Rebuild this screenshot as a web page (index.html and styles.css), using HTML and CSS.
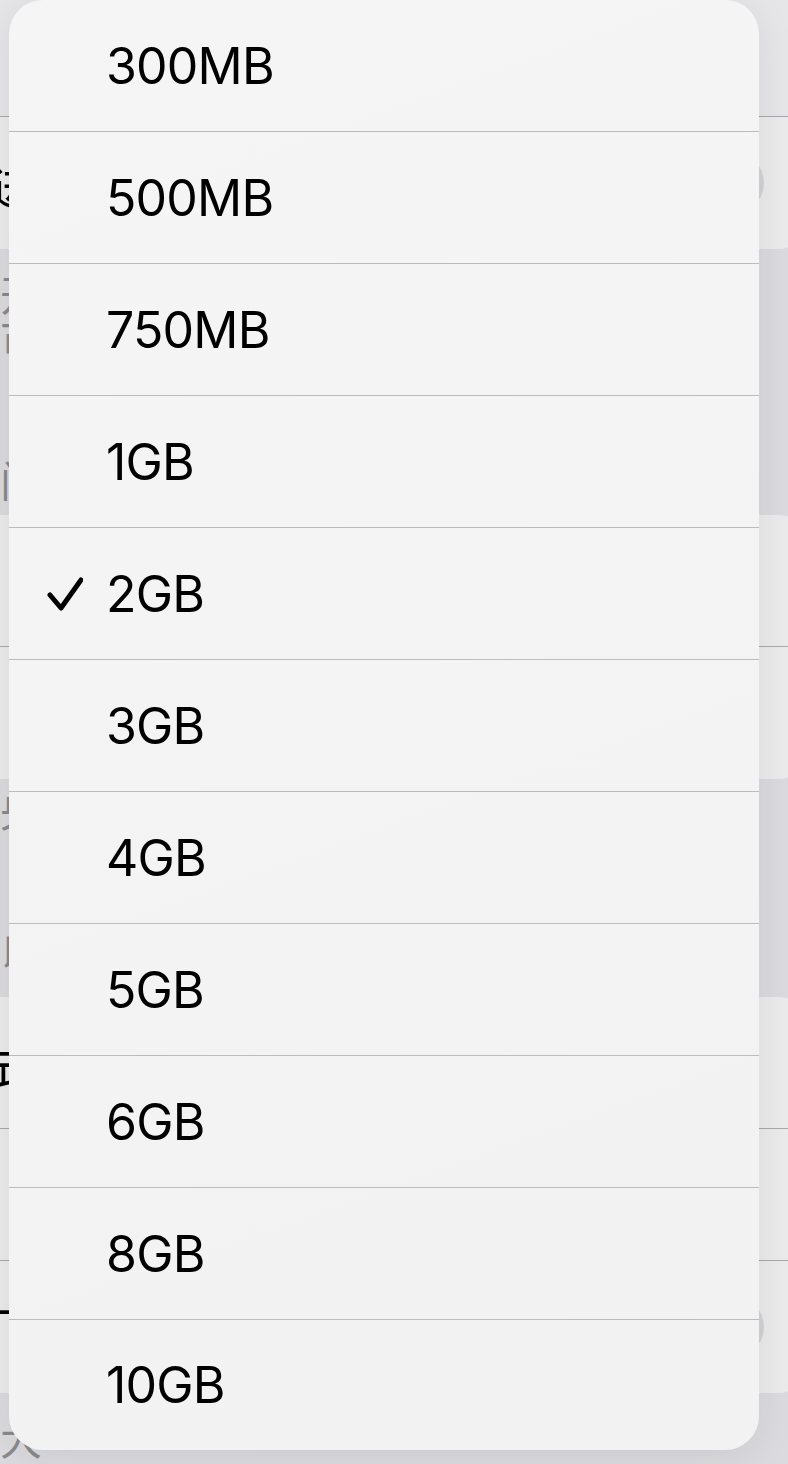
FILE: index.html
```html
<!DOCTYPE html>
<html lang="zh-CN">
<head>
  <meta charset="UTF-8">
  <title>缓存大小</title>
  <link rel="stylesheet" href="styles.css">
</head>
<body>
  <div class="page">
    <div class="navbar"></div>

    <div class="group group-first">
      <div class="row">
        <span class="row-label">进</span>
        <span class="toggle"></span>
      </div>
    </div>

    <div class="gap gap-a">
      <p class="note">开</p>
      <p class="note">可</p>
      <p class="header">门</p>
    </div>

    <div class="group">
      <div class="row"><span class="row-label"></span></div>
      <div class="row"><span class="row-label"></span></div>
    </div>

    <div class="gap gap-b">
      <p class="note">央</p>
      <p class="header">以</p>
    </div>

    <div class="group">
      <div class="row"><span class="row-label">式</span></div>
      <div class="row"><span class="row-label"></span></div>
      <div class="row">
        <span class="row-label">下</span>
        <span class="toggle"></span>
      </div>
    </div>

    <div class="gap gap-c">
      <p class="note">大</p>
    </div>
  </div>

  <div class="menu">
    <div class="menu-item"><span class="check"></span><span class="menu-text">300MB</span></div>
    <div class="menu-item"><span class="check"></span><span class="menu-text">500MB</span></div>
    <div class="menu-item"><span class="check"></span><span class="menu-text">750MB</span></div>
    <div class="menu-item"><span class="check"></span><span class="menu-text">1GB</span></div>
    <div class="menu-item selected">
      <span class="check">
        <svg width="36" height="36" viewBox="0 0 36 36">
          <path d="M3 19 L14 32 L34 4" fill="none" stroke="#000" stroke-width="5" stroke-linecap="round" stroke-linejoin="round"/>
        </svg>
      </span>
      <span class="menu-text">2GB</span>
    </div>
    <div class="menu-item"><span class="check"></span><span class="menu-text">3GB</span></div>
    <div class="menu-item"><span class="check"></span><span class="menu-text">4GB</span></div>
    <div class="menu-item"><span class="check"></span><span class="menu-text">5GB</span></div>
    <div class="menu-item"><span class="check"></span><span class="menu-text">6GB</span></div>
    <div class="menu-item"><span class="check"></span><span class="menu-text">8GB</span></div>
    <div class="menu-item"><span class="check"></span><span class="menu-text">10GB</span></div>
  </div>
</body>
</html>
```

FILE: styles.css
```css
html, body {
  margin: 0;
  height: 100%;
  overflow: hidden;
}

body {
  background-color: #dbdbdf;
  font-family: Inter, "Noto Sans CJK SC", sans-serif;
  color: #000;
  position: relative;
}

/* settings page behind the menu */
.page {
  margin-left: -40px;
  width: 840px;
}

.navbar {
  height: 116px;
  background-color: #e6e6e8;
  border-bottom: 1px solid #a8a8aa;
}

.group {
  background-color: #ebebec;
  border-radius: 20px;
  overflow: hidden;
}

.group-first {
  border-radius: 0 0 20px 20px;
}

.row {
  height: 131px;
  display: flex;
  align-items: center;
  justify-content: space-between;
  padding: 0 28px;
  border-bottom: 1px solid #a9a9ab;
}

.row:last-child {
  border-bottom: none;
  height: 132px;
}

.row-label {
  font-size: 50px;
}

.toggle {
  width: 102px;
  height: 62px;
  border-radius: 31px;
  background-color: #d3d3d5;
  margin-right: 8px;
}

.gap {
  box-sizing: border-box;
  padding-left: 40px;
  color: #8a8a8e;
  font-size: 42px;
  overflow: hidden;
}

.gap p {
  margin: 0;
  line-height: 46px;
  white-space: nowrap;
}

.gap-a {
  height: 266px;
  padding-top: 24px;
}

.gap-a .header {
  margin-top: 94px;
}

.gap-b {
  height: 218px;
  padding-top: 10px;
}

.gap-b .header {
  margin-top: 96px;
}

.gap-c {
  height: 80px;
  padding-top: 24px;
}

/* popup menu */
.menu {
  position: absolute;
  left: 9px;
  top: 0;
  width: 750px;
  height: 1450px;
  border-radius: 34px;
  background: linear-gradient(160deg, #f5f5f6, #f2f2f3);
  box-shadow: 0 6px 40px rgba(0, 0, 0, 0.08);
  overflow: hidden;
}

.menu-item {
  height: 131px;
  display: flex;
  align-items: center;
  padding-left: 38px;
  border-bottom: 1px solid #bbbbbd;
}

.menu-item:last-child {
  border-bottom: none;
  height: 130px;
}

.check {
  width: 59px;
  height: 36px;
  display: flex;
  align-items: center;
}

.menu-text {
  font-size: 50px;
  letter-spacing: -0.8px;
}
```
